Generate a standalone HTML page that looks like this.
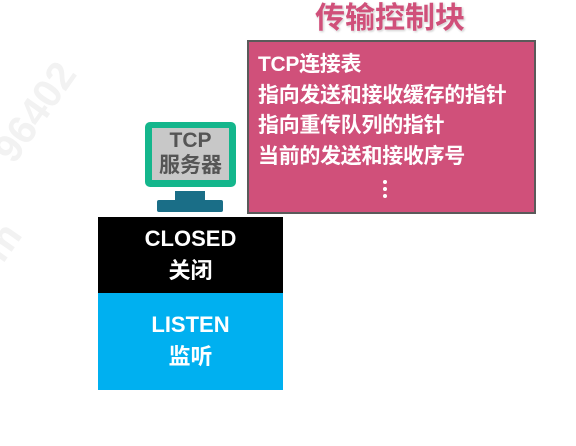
<!DOCTYPE html>
<html><head><meta charset="utf-8"><style>
body{margin:0;width:576px;height:446px;background:#fff;position:relative;overflow:hidden;font-family:"Liberation Sans","Noto Sans CJK SC",sans-serif;font-weight:bold}
.a{position:absolute}
.wm{color:#f2f2f2;font-size:40px;transform:rotate(-55deg);}
</style></head><body>
<div class="a wm" style="left:-20px;top:90px">96402</div>
<div class="a wm" style="left:-15px;top:220px">m</div>
<div class="a" style="left:240px;top:0px;width:300px;text-align:center;font-size:30px;line-height:38px;color:#d0507a;text-shadow:0 0 2px #fff,1px 1px 2px #bbb">传输控制块</div>
<div class="a" style="left:247px;top:40px;background:#d0507a;border:2px solid #5a5a5a;color:#fff;font-size:21px;line-height:30.5px;box-sizing:border-box;width:289px;height:174px;padding:8px 0 0 9px;letter-spacing:-0.3px">
TCP连接表<br>指向发送和接收缓存的指针<br>指向重传队列的指针<br>当前的发送和接收序号
<div style="position:absolute;left:134px;top:138px;width:4px">
<div style="width:4px;height:4px;border-radius:2px;background:#fff;margin-bottom:3px"></div>
<div style="width:4px;height:4px;border-radius:2px;background:#fff;margin-bottom:3px"></div>
<div style="width:4px;height:4px;border-radius:2px;background:#fff"></div></div>
</div>
<div class="a" style="left:145px;top:122px;width:91px;height:65px;background:#14b68c;border-radius:5px"></div>
<div class="a" style="left:152px;top:128px;width:77px;height:52px;background:#c8c8c8;color:#555;font-size:21px;line-height:25px;text-align:center">TCP<br>服务器</div>
<div class="a" style="left:175px;top:191px;width:30px;height:10px;background:#1a6e87"></div>
<div class="a" style="left:157px;top:200px;width:66px;height:12px;background:#1a6e87;border-radius:2px"></div>
<div class="a" style="left:98px;top:217px;width:185px;height:76px;background:#000;color:#fff;font-size:22px;line-height:32px;text-align:center;padding-top:6px;box-sizing:border-box">CLOSED<br>关闭</div>
<div class="a" style="left:98px;top:293px;width:185px;height:97px;background:#00b0f0;color:#fff;font-size:22px;line-height:32px;text-align:center;padding-top:16px;box-sizing:border-box">LISTEN<br>监听</div>
</body></html>
